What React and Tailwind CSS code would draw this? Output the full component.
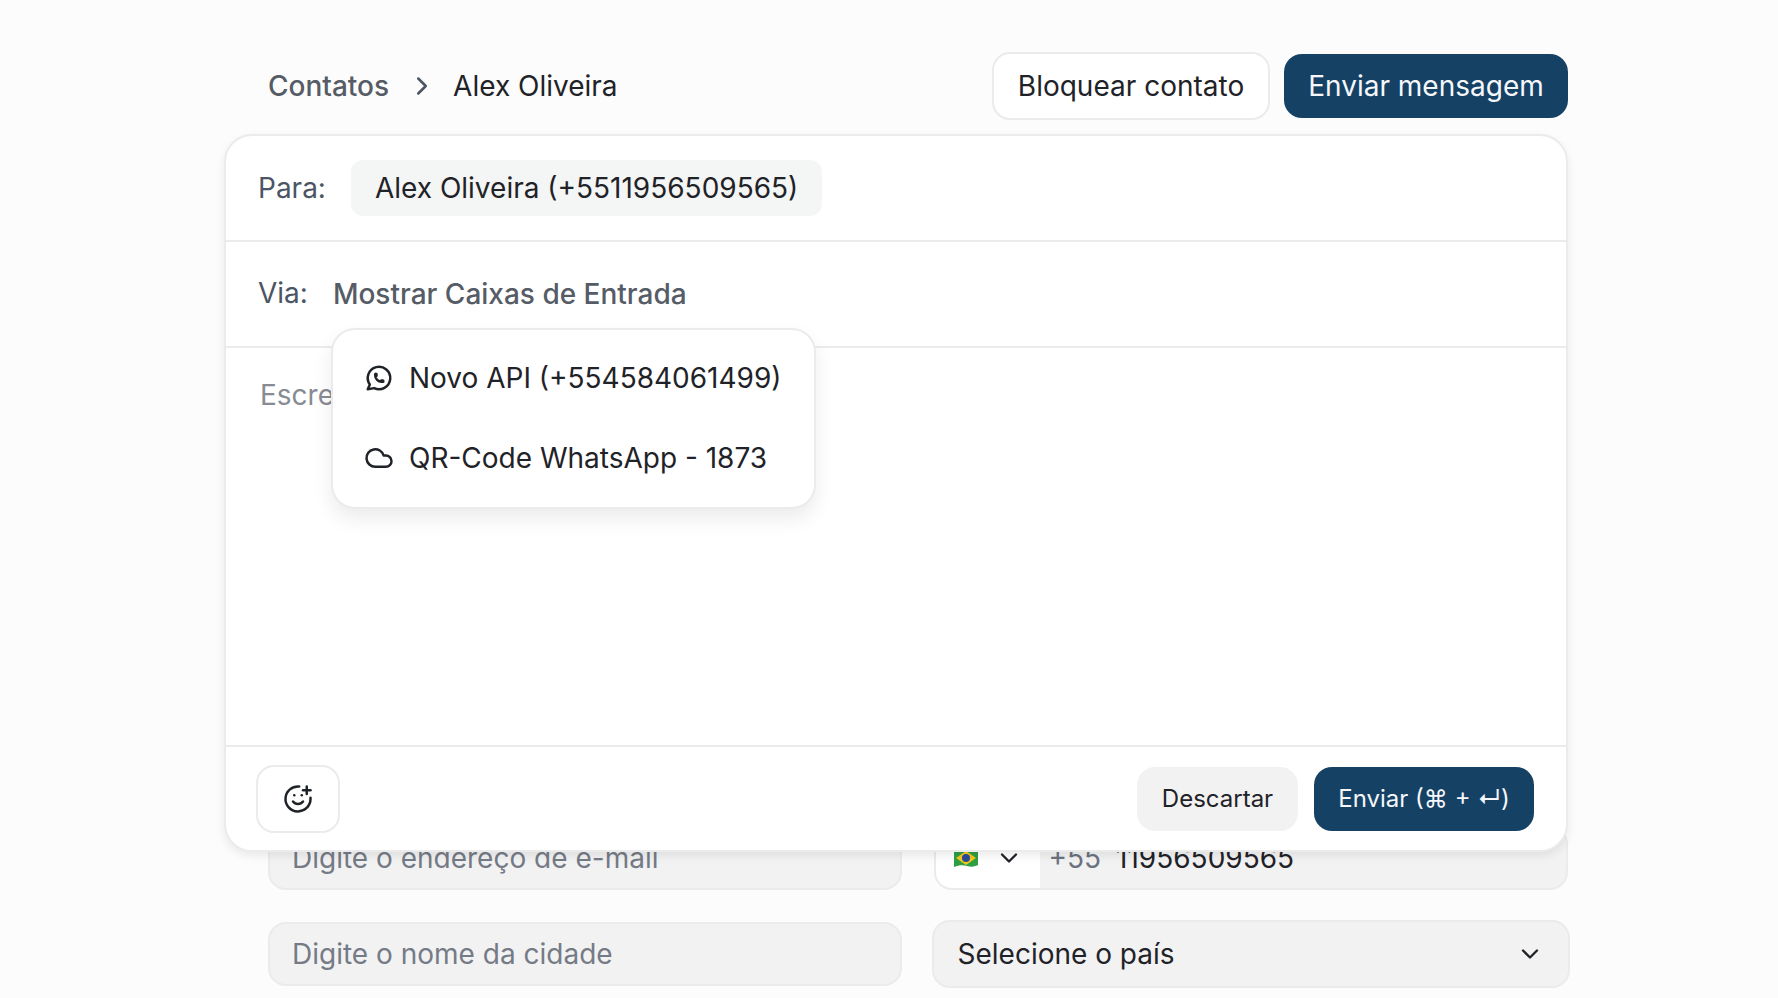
import React from 'react';
import { ChevronRight, ChevronDown, Cloud, SmilePlus } from 'lucide-react';
import { TbBrandWhatsapp } from 'react-icons/tb';

const font = "[font-family:Inter,'Noto_Sans',sans-serif]";

// Brazilian flag, the page shows it as an emoji
const BrazilFlag = () => (
  <svg width="26" height="20" viewBox="0 0 26 20">
    <path d="M1 2 C6 0 10 1 14 2 C18 3 22 3 25 1 L25 17 C21 19 18 19 14 18 C10 17 6 17 1 19 Z" fill="#2f9e44" />
    <path d="M13 3 L23 10 L13 17 L3 10 Z" fill="#f2c919" />
    <circle cx="13" cy="10" r="4" fill="#2b4a9b" />
  </svg>
);

const App = () => {
  return (
    <div className={`${font} h-[998px] w-full overflow-hidden bg-[#fcfcfc] pl-[224px] pr-[210px] pt-[52px]`}>
      {/* Top bar */}
      <div className="flex h-[68px] items-center justify-between pl-[44px]">
        <div className="flex items-center text-[28px] leading-none">
          <span className="font-medium text-[#565c66]">Contatos</span>
          <ChevronRight size={30} strokeWidth={2} className="ml-[18px] mr-[16px] text-[#4b5563]" />
          <span className="text-[#1f2328]">Alex Oliveira</span>
        </div>
        <div className="flex items-center gap-[14px]">
          <button className="h-[68px] w-[278px] rounded-[18px] border-2 border-[#ebebeb] bg-white text-[28px] text-[#1f2328]">
            Bloquear contato
          </button>
          <button className="h-[64px] w-[284px] rounded-[18px] bg-[#154165] text-[28px] text-[#f5f7fa]">
            Enviar mensagem
          </button>
        </div>
      </div>

      {/* Composer */}
      <div className="relative z-10 mt-[14px] flex h-[718px] flex-col rounded-[28px] border-2 border-[#ebebeb] bg-white shadow-[0_4px_10px_rgba(0,0,0,0.08)]">
        <div className="flex h-[106px] items-center border-b-2 border-[#ebebeb] pl-[32px]">
          <span className="text-[28px] text-[#4b5563]">Para:</span>
          <span className="ml-[25px] flex h-[56px] items-center rounded-[12px] bg-[#f4f5f5] px-[24px] text-[28px] text-[#1f2328]">
            Alex Oliveira (+5511956509565)
          </span>
        </div>

        <div className="relative flex h-[106px] items-center border-b-2 border-[#ebebeb] pl-[32px]">
          <span className="mb-[2px] text-[28px] text-[#4b5563]">Via:</span>
          <span className="ml-[25px] text-[28px] font-medium text-[#565c66]">Mostrar Caixas de Entrada</span>

          {/* Inbox dropdown */}
          <div className="absolute left-[105px] top-[86px] z-20 flex h-[181px] w-[485px] flex-col justify-center gap-[36px] rounded-[24px] border-2 border-[#ebebeb] bg-white pb-[2px] pl-[31px] shadow-[0_10px_20px_rgba(0,0,0,0.08)]">
            <div className="flex h-[44px] items-center gap-[15px] text-[28px] text-[#1f2328]">
              <TbBrandWhatsapp size={30} />
              <span>Novo API (+554584061499)</span>
            </div>
            <div className="flex h-[44px] items-center gap-[15px] text-[28px] text-[#1f2328]">
              <Cloud size={30} strokeWidth={2} />
              <span>QR-Code WhatsApp - 1873</span>
            </div>
          </div>
        </div>

        <div className="flex-1 pl-[34px] pt-[26px] text-[28px] text-[#868b94]">Escreva sua mensagem</div>

        <div className="flex h-[105px] items-center justify-between border-t-2 border-[#ebebeb] pl-[30px] pr-[32px]">
          <button className="flex h-[68px] w-[84px] items-center justify-center rounded-[18px] border-2 border-[#ebebeb] bg-white text-[#1f2328]">
            <SmilePlus size={30} strokeWidth={2} />
          </button>
          <div className="flex items-center gap-[16px]">
            <button className="h-[64px] w-[161px] rounded-[18px] bg-[#f2f2f2] text-[24px] text-[#1f2328]">Descartar</button>
            <button className="h-[64px] w-[220px] rounded-[18px] bg-[#154165] text-[24px] text-[#f5f7fa]">
              Enviar (⌘ + ↵)
            </button>
          </div>
        </div>
      </div>

      {/* Contact form, behind the composer */}
      <div className="-mt-[26px] grid grid-cols-2 items-center gap-x-[31px] gap-y-[30px] pl-[44px] text-[28px]">
        <div className="mr-[1px] flex h-[64px] items-center rounded-[18px] border-2 border-[#ebebeb] bg-[#f2f2f2] px-[22px] text-[#757b86]">
          Digite o endereço de e-mail
        </div>
        <div className="flex h-[64px] items-center overflow-hidden rounded-[18px] border-2 border-[#ebebeb] bg-[#f2f2f2]">
          <div className="flex h-full w-[104px] shrink-0 items-center gap-[16px] bg-white pl-[17px]">
            <BrazilFlag />
            <ChevronDown size={28} className="text-[#1f2328]" />
          </div>
          <span className="ml-[9px] text-[#6b7280]">+55</span>
          <span className="ml-[15px] text-[#1f2328]">11956509565</span>
        </div>
        <div className="mr-[1px] flex h-[64px] items-center rounded-[18px] border-2 border-[#ebebeb] bg-[#f2f2f2] px-[22px] text-[#757b86]">
          Digite o nome da cidade
        </div>
        <div className="-mx-[2px] flex h-[68px] items-center justify-between rounded-[18px] border-2 border-[#ebebeb] bg-[#f2f2f2] pl-[24px] pr-[24px] text-[#1f2328]">
          Selecione o país
          <ChevronDown size={28} />
        </div>
      </div>
    </div>
  );
};

export default App;
